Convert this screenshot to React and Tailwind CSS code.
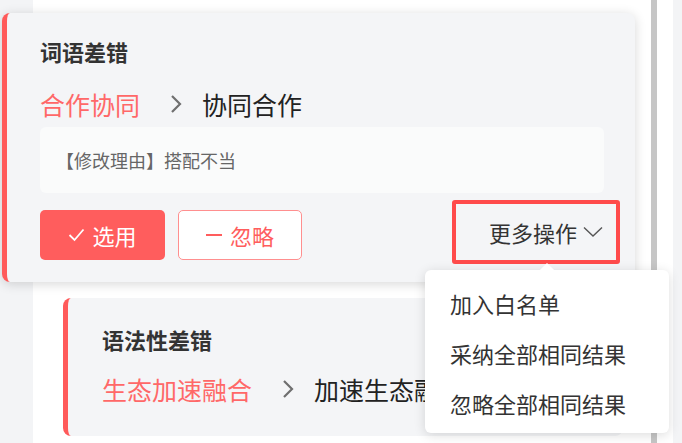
import React from "react";

const FONT = { fontFamily: '"Noto Sans CJK SC", "Noto Sans", sans-serif' };

function ChevronRight() {
  return (
    <svg width="14" height="20" viewBox="0 0 14 20" className="shrink-0">
      <polyline points="3,2 11,10 3,18" fill="none" stroke="#6f6f6f" strokeWidth="2.2" />
    </svg>
  );
}

function ChevronDown() {
  return (
    <svg width="20" height="12" viewBox="0 0 20 12" className="shrink-0">
      <polyline points="1,1.5 10,10 19,1.5" fill="none" stroke="#555" strokeWidth="1.4" />
    </svg>
  );
}

function Check() {
  return (
    <svg width="17" height="14" viewBox="0 0 17 14" className="shrink-0">
      <polyline points="1.5,7 6.5,12 15.5,1.5" fill="none" stroke="#fff" strokeWidth="1.8" />
    </svg>
  );
}

function Correction({ from, to }) {
  return (
    <div className="flex items-center h-[32px] text-[25px] leading-[32px]">
      <span className="text-[#ff6868]">{from}</span>
      <span className="ml-[29px] mr-[19px] flex items-center">
        <ChevronRight />
      </span>
      <span className="text-[#222] whitespace-nowrap">{to}</span>
    </div>
  );
}

export default function App() {
  return (
    <div className="w-[682px] h-[443px] relative overflow-hidden flex bg-[#f3f4f6]" style={FONT}>
      <div className="w-[33px] shrink-0" />

      {/* list panel */}
      <div className="w-[618px] shrink-0 bg-white flex flex-col pl-[30px] pt-[13px]">
        {/* active card */}
        <div className="-ml-[61px] w-[633px] relative z-10 bg-[#f4f5f7] rounded-[8px] border-l-[5px] border-[#ff5a5a] shadow-[0_2px_12px_rgba(0,0,0,0.16)] pt-[24px] pb-[18px] pl-[33px] pr-[31px]">
          <div className="text-[22px] leading-[28px] font-bold text-[#333]">词语差错</div>
          <div className="mt-[23px]">
            <Correction from="合作协同" to="协同合作" />
          </div>
          <div className="mt-[7px] h-[66px] rounded-[6px] bg-[#fafbfb] flex items-center pl-[16px] text-[18px] text-[#666]">
            【修改理由】搭配不当
          </div>
          <div className="mt-[7px] flex items-start">
            <button className="mt-[10px] w-[125px] h-[50px] rounded-[5px] bg-[#ff5d5d] text-white flex items-center justify-center gap-[7px] text-[22px]">
              <Check />
              <span>选用</span>
            </button>
            <button className="ml-[13px] mt-[10px] w-[124px] h-[50px] rounded-[5px] bg-white border border-[#ff8f8f] text-[#ff5d5d] flex items-center justify-center gap-[8px] text-[22px]">
              <span className="w-[16px] h-[2px] bg-[#ff5d5d]" />
              <span>忽略</span>
            </button>
            <div className="flex-1" />
            <div className="-mr-[16px] w-[168px] h-[64px] rounded-[3px] border-[4px] border-[#ff4b4b] flex items-center justify-end pr-[13px] gap-[6px] text-[22px] text-[#333]">
              <span>更多操作</span>
              <ChevronDown />
            </div>
          </div>
        </div>

        {/* next card */}
        <div className="mt-[16px] w-[560px] bg-[#f4f5f7] rounded-[8px] border-l-[5px] border-[#ff5a5a] pt-[27px] pb-[31px] pl-[34px] pr-[30px]">
          <div className="text-[22px] leading-[28px] font-bold text-[#333]">语法性差错</div>
          <div className="mt-[20px]">
            <Correction from="生态加速融合" to="加速生态融合" />
          </div>
        </div>
      </div>

      <div className="w-[6px] shrink-0 bg-[#c6c6c6]" />
      <div className="w-[16px] shrink-0 bg-white" />
      <div className="flex-1" />

      {/* dropdown menu */}
      <div className="absolute left-[425px] top-[270px] w-[244px] h-[163px] z-20 bg-white rounded-[6px] shadow-[0_2px_12px_rgba(0,0,0,0.14)] pt-[8px]">
        <div className="absolute -top-[5px] left-[117px] w-[10px] h-[10px] rotate-45 bg-white" />
        {["加入白名单", "采纳全部相同结果", "忽略全部相同结果"].map((t) => (
          <div key={t} className="h-[50px] flex items-center pl-[25px] text-[22px] text-[#333]">
            {t}
          </div>
        ))}
      </div>
    </div>
  );
}
